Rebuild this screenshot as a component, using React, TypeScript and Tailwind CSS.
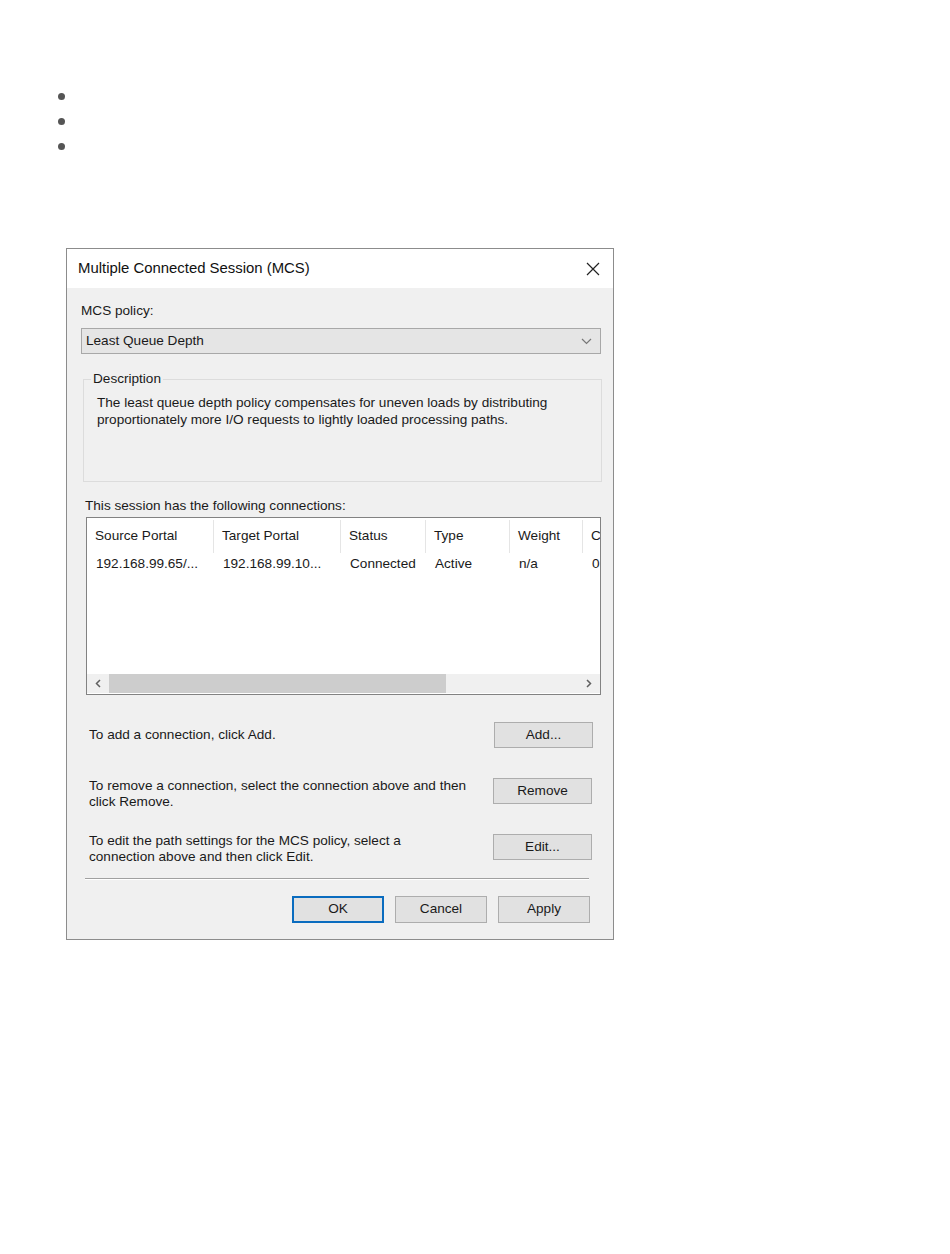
import React from "react";

const font = { fontFamily: '"Liberation Sans", Arial, sans-serif' };

function Btn({ children, primary = false, className = "" }: { children: React.ReactNode; primary?: boolean; className?: string }) {
  return (
    <div
      className={
        "flex items-center justify-center bg-[#e1e1e1] text-[13.6px] text-[#1a1a1a] " +
        (primary ? "border-2 border-[#0a6cbf] " : "border border-[#adadad] ") +
        className
      }
    >
      {children}
    </div>
  );
}

export default function App() {
  const cols = [
    { h: "Source Portal", v: "192.168.99.65/...", w: 127 },
    { h: "Target Portal", v: "192.168.99.10...", w: 127 },
    { h: "Status", v: "Connected", w: 85 },
    { h: "Type", v: "Active", w: 84 },
    { h: "Weight", v: "n/a", w: 73 },
    { h: "C", v: "0", w: 20 },
  ];
  return (
    <div className="min-h-[1254px] w-[950px] bg-white text-[#1a1a1a]" style={font}>
      <ul className="pt-[93px] pl-[58px] flex flex-col gap-[19px]">
        {[0, 1, 2].map((i) => (
          <li key={i} className="h-[6px] flex items-center">
            <span className="block w-[7px] h-[7px] rounded-full bg-[#555]" />
          </li>
        ))}
      </ul>

      <div className="ml-[66px] mt-[99px] w-[548px] h-[692px] border border-[#8c8c8c] bg-[#f0f0f0] flex flex-col">
        <div className="h-[39px] bg-white flex items-center justify-between pl-[11px] pr-[12px]">
          <span className="text-[14.9px] text-[#111]">Multiple Connected Session (MCS)</span>
          <svg width="14" height="14" viewBox="0 0 14 14" className="mr-[1px]">
            <path d="M1 1 L13 13 M13 1 L1 13" stroke="#222" strokeWidth="1.2" />
          </svg>
        </div>

        <div className="flex flex-col px-[14px] text-[13.6px]">
          <div className="mt-[15px] h-[16px] leading-[16px]">MCS policy:</div>

          <div className="mt-[9px] h-[26px] w-[520px] border border-[#a8a8a8] bg-[#e5e5e5] flex items-center justify-between pl-[4px] pr-[8px]">
            <span>Least Queue Depth</span>
            <svg width="11" height="7" viewBox="0 0 11 7">
              <path d="M1 1 L5.5 5.5 L10 1" stroke="#777" strokeWidth="1.2" fill="none" />
            </svg>
          </div>

          <div className="relative mt-[25px] ml-[2px] w-[519px] h-[103px] border border-[#dcdcdc]">
            <span className="absolute -top-[9px] left-[7px] bg-[#f0f0f0] px-[2px] leading-[16px]">Description</span>
            <div className="pt-[14px] pl-[13px] leading-[17px]">
              The least queue depth policy compensates for uneven loads by distributing
              <br />
              proportionately more I/O requests to lightly loaded processing paths.
            </div>
          </div>

          <div className="mt-[16px] ml-[4px] h-[16px] leading-[16px]">This session has the following connections:</div>

          <div className="mt-[3px] ml-[5px] w-[515px] h-[178px] border border-[#828282] bg-white flex flex-col overflow-hidden">
            <div className="flex h-[35px] items-end">
              {cols.map((c, i) => (
                <div
                  key={c.h}
                  style={{ width: c.w }}
                  className={"shrink-0 h-[33px] flex items-center pl-[8px] whitespace-nowrap overflow-hidden " + (i < cols.length - 1 ? "border-r border-[#e5e5e5]" : "")}
                >
                  {c.h}
                </div>
              ))}
            </div>
            <div className="flex h-[22px] items-center">
              {cols.map((c) => (
                <div key={c.h} style={{ width: c.w }} className="shrink-0 pl-[9px] whitespace-nowrap overflow-hidden">
                  {c.v}
                </div>
              ))}
            </div>
            <div className="flex-1" />
            <div className="h-[19px] mb-[1px] bg-[#f0f0f0] flex items-center">
              <div className="w-[22px] flex justify-center">
                <svg width="6" height="9" viewBox="0 0 6 9">
                  <path d="M5 1 L1.5 4.5 L5 8" stroke="#606060" strokeWidth="1.5" fill="none" />
                </svg>
              </div>
              <div className="w-[337px] h-[19px] bg-[#cdcdcd]" />
              <div className="flex-1" />
              <div className="w-[22px] flex justify-center">
                <svg width="6" height="9" viewBox="0 0 6 9">
                  <path d="M1 1 L4.5 4.5 L1 8" stroke="#606060" strokeWidth="1.5" fill="none" />
                </svg>
              </div>
            </div>
          </div>

          <div className="mt-[27px] flex items-center justify-between">
            <span className="ml-[8px]">To add a connection, click Add.</span>
            <Btn className="w-[99px] h-[26px] mr-[6px]">Add...</Btn>
          </div>

          <div className="mt-[30px] flex items-start justify-between">
            <span className="ml-[8px] leading-[16px]">
              To remove a connection, select the connection above and then
              <br />
              click Remove.
            </span>
            <Btn className="w-[99px] h-[26px] mr-[7px]">Remove</Btn>
          </div>

          <div className="mt-[23px] flex items-start justify-between">
            <span className="ml-[8px] leading-[16px]">
              To edit the path settings for the MCS policy, select a
              <br />
              connection above and then click Edit.
            </span>
            <Btn className="w-[99px] h-[26px] mr-[7px] mt-[1px]">Edit...</Btn>
          </div>

          <div className="mt-[13px] ml-[4px] w-[504px] h-[2px] border-t border-[#a0a0a0] border-b border-b-white" />

          <div className="mt-[16px] flex justify-end gap-[11px] pr-[9px]">
            <Btn primary className="w-[92px] h-[27px]">OK</Btn>
            <Btn className="w-[92px] h-[27px]">Cancel</Btn>
            <Btn className="w-[92px] h-[27px]">Apply</Btn>
          </div>
        </div>
      </div>
    </div>
  );
}
